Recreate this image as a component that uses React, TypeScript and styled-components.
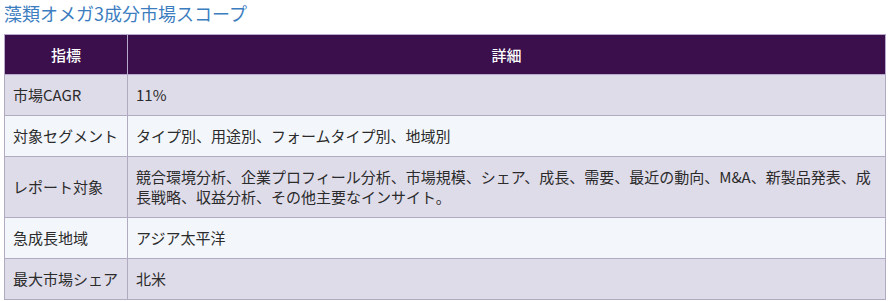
import React from 'react';
import styled, { createGlobalStyle } from 'styled-components';

const GlobalStyle = createGlobalStyle`
    body {
        margin: 0;
        background: #ffffff;
        font-family: "Noto Sans CJK JP", "Noto Sans", sans-serif;
    }
`;

const Page = styled.div`
    padding: 0 9px 0 4px;
`;

const Title = styled.h3`
    margin: 0;
    padding: 1px 0 0;
    height: 33px;
    font-size: 18px;
    line-height: 25px;
    font-weight: 400;
    color: #3c7dc0;
`;

const Table = styled.table`
    width: 100%;
    border-collapse: collapse;
    font-size: 15px;
    color: #2b2b2b;
`;

const HeadCell = styled.th<{ $w?: number }>`
    background: #3a0f4b;
    color: #ffffff;
    font-weight: 500;
    height: 39px;
    padding: 0 9px;
    text-align: center;
    border: 1px solid #b7a9cc;
    width: ${p => (p.$w ? `${p.$w}px` : 'auto')};
`;

const Row = styled.tr<{ $alt: boolean }>`
    background: ${p => (p.$alt ? '#f3f7fc' : '#dfdcea')};
`;

const Cell = styled.td`
    padding: 10px 8px;
    line-height: 20px;
    border: 1px solid #b0abc0;
    vertical-align: middle;
    white-space: nowrap;
`;

const DetailCell = styled(Cell)`
    white-space: normal;
`;

const rows: [string, string][] = [
    ['市場CAGR', '11%'],
    ['対象セグメント', 'タイプ別、用途別、フォームタイプ別、地域別'],
    ['レポート対象', '競合環境分析、企業プロフィール分析、市場規模、シェア、成長、需要、最近の動向、M&A、新製品発表、成長戦略、収益分析、その他主要なインサイト。'],
    ['急成長地域', 'アジア太平洋'],
    ['最大市場シェア', '北米'],
];

export default function App() {
    return (
        <Page>
            <GlobalStyle />
            <Title>藻類オメガ3成分市場スコープ</Title>
            <Table>
                <thead>
                    <tr>
                        <HeadCell $w={104}>指標</HeadCell>
                        <HeadCell>詳細</HeadCell>
                    </tr>
                </thead>
                <tbody>
                    {rows.map(([k, v], i) => (
                        <Row key={k} $alt={i % 2 === 1}>
                            <Cell>{k}</Cell>
                            <DetailCell>{v}</DetailCell>
                        </Row>
                    ))}
                </tbody>
            </Table>
        </Page>
    );
}
